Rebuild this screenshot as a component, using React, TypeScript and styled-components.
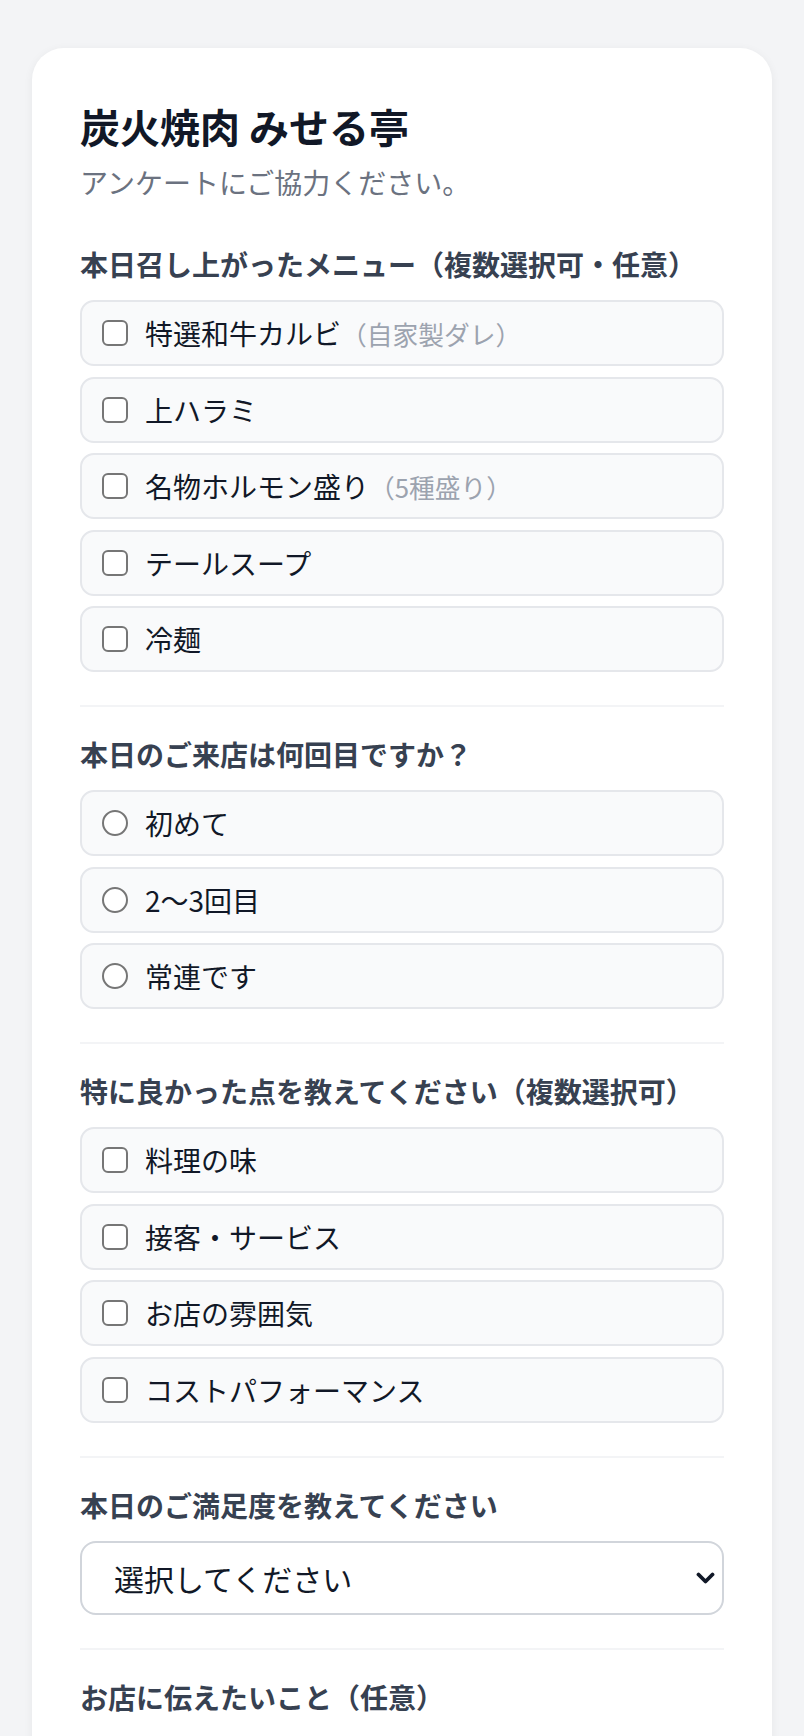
import styled, { createGlobalStyle } from 'styled-components'

const GlobalStyle = createGlobalStyle`
  body {
    margin: 0;
    background: #f3f4f6;
    font-family: 'Noto Sans CJK JP', 'Noto Sans', sans-serif;
    color: #111827;
  }
  * {
    box-sizing: border-box;
  }
`

const Page = styled.div`
  padding: 48px 32px 64px;
`

const Card = styled.div`
  background: #ffffff;
  border-radius: 32px;
  padding: 48px;
  box-shadow: 0 2px 10px rgba(0, 0, 0, 0.06);
`

const Title = styled.h1`
  margin: 0;
  font-size: 40px;
  line-height: 60px;
  font-weight: 700;
  color: #111827;
`

const Subtitle = styled.p`
  margin: 6px 0 0;
  font-size: 28px;
  line-height: 40px;
  color: #6b7280;
`

const Form = styled.form`
  display: flex;
  flex-direction: column;
  margin-top: 42px;
`

type SectionProps = {
  divided?: boolean
}
const Section = styled.section<SectionProps>`
  display: flex;
  flex-direction: column;
  margin-top: ${(props) => (props.divided ? '33px' : '0')};
  padding-top: ${(props) => (props.divided ? '27px' : '0')};
  border-top: ${(props) => (props.divided ? '2px solid #f3f4f6' : 'none')};
`

const Label = styled.div`
  font-size: 28px;
  line-height: 40px;
  font-weight: 700;
  color: #374151;
  margin-bottom: 16px;
`

const OptionList = styled.div`
  display: flex;
  flex-direction: column;
  gap: 10.5px;
`

const Option = styled.label`
  display: flex;
  align-items: center;
  gap: 17px;
  height: 66px;
  padding: 0 20px;
  border: 2px solid #e5e7eb;
  border-radius: 14px;
  background: #f9fafb;
  font-size: 28px;
  color: #111827;
  cursor: pointer;
`

const CheckBox = styled.input`
  appearance: none;
  flex: none;
  margin: 0;
  width: 26px;
  height: 26px;
  border: 2px solid #767676;
  border-radius: 6px;
  background: #ffffff;
`

const Radio = styled.input`
  appearance: none;
  flex: none;
  margin: 0;
  width: 26px;
  height: 26px;
  border: 2px solid #767676;
  border-radius: 50%;
  background: #ffffff;
`

const Note = styled.span`
  font-size: 0.92em;
  color: #9ca3af;
`

const SelectWrap = styled.div`
  position: relative;
`

const Select = styled.select`
  appearance: none;
  width: 100%;
  height: 74px;
  padding: 0 60px 0 32px;
  border: 2px solid #d1d5db;
  border-radius: 16px;
  background: #ffffff;
  font-family: inherit;
  font-size: 30px;
  color: #111827;
`

const Chevron = styled.svg`
  position: absolute;
  right: 9px;
  top: 50%;
  width: 19px;
  height: 14px;
  transform: translateY(-50%);
  pointer-events: none;
`

const TextArea = styled.textarea`
  width: 100%;
  height: 200px;
  margin-top: 12px;
  padding: 20px;
  border: 2px solid #d1d5db;
  border-radius: 16px;
  font-family: inherit;
  font-size: 28px;
  resize: none;
`

const SubmitButton = styled.button`
  margin-top: 48px;
  height: 88px;
  border: none;
  border-radius: 16px;
  background: #b91c1c;
  color: #ffffff;
  font-family: inherit;
  font-size: 30px;
  font-weight: 700;
`

type Item = { text: string; note?: string }

const MENU: Item[] = [
  { text: '特選和牛カルビ', note: '（自家製ダレ）' },
  { text: '上ハラミ' },
  { text: '名物ホルモン盛り', note: '（5種盛り）' },
  { text: 'テールスープ' },
  { text: '冷麺' },
]

const VISITS: Item[] = [{ text: '初めて' }, { text: '2〜3回目' }, { text: '常連です' }]

const GOOD_POINTS: Item[] = [
  { text: '料理の味' },
  { text: '接客・サービス' },
  { text: 'お店の雰囲気' },
  { text: 'コストパフォーマンス' },
]

function Choices({ items, type, name }: { items: Item[]; type: 'checkbox' | 'radio'; name: string }) {
  return (
    <OptionList>
      {items.map((item) => (
        <Option key={item.text}>
          {type === 'checkbox' ? (
            <CheckBox type="checkbox" name={name} />
          ) : (
            <Radio type="radio" name={name} />
          )}
          <span>
            {item.text}
            {item.note && <Note>{item.note}</Note>}
          </span>
        </Option>
      ))}
    </OptionList>
  )
}

export default function App() {
  return (
    <>
      <GlobalStyle />
      <Page>
        <Card>
          <Title>炭火焼肉 みせる亭</Title>
          <Subtitle>アンケートにご協力ください。</Subtitle>
          <Form onSubmit={(e) => e.preventDefault()}>
            <Section>
              <Label>本日召し上がったメニュー（複数選択可・任意）</Label>
              <Choices items={MENU} type="checkbox" name="menu" />
            </Section>
            <Section divided>
              <Label>本日のご来店は何回目ですか？</Label>
              <Choices items={VISITS} type="radio" name="visit" />
            </Section>
            <Section divided>
              <Label>特に良かった点を教えてください（複数選択可）</Label>
              <Choices items={GOOD_POINTS} type="checkbox" name="good" />
            </Section>
            <Section divided>
              <Label>本日のご満足度を教えてください</Label>
              <SelectWrap>
                <Select defaultValue="">
                  <option value="">選択してください</option>
                  <option value="5">大変満足</option>
                  <option value="4">満足</option>
                  <option value="3">普通</option>
                  <option value="2">やや不満</option>
                  <option value="1">不満</option>
                </Select>
                <Chevron viewBox="0 0 19 14">
                  <path
                    d="M2.5 3.5 L9.5 10.5 L16.5 3.5"
                    fill="none"
                    stroke="#111827"
                    strokeWidth="3.8"
                    strokeLinecap="round"
                    strokeLinejoin="round"
                  />
                </Chevron>
              </SelectWrap>
            </Section>
            <Section divided>
              <Label>お店に伝えたいこと（任意）</Label>
              <TextArea />
            </Section>
            <SubmitButton type="submit">送信する</SubmitButton>
          </Form>
        </Card>
      </Page>
    </>
  )
}
